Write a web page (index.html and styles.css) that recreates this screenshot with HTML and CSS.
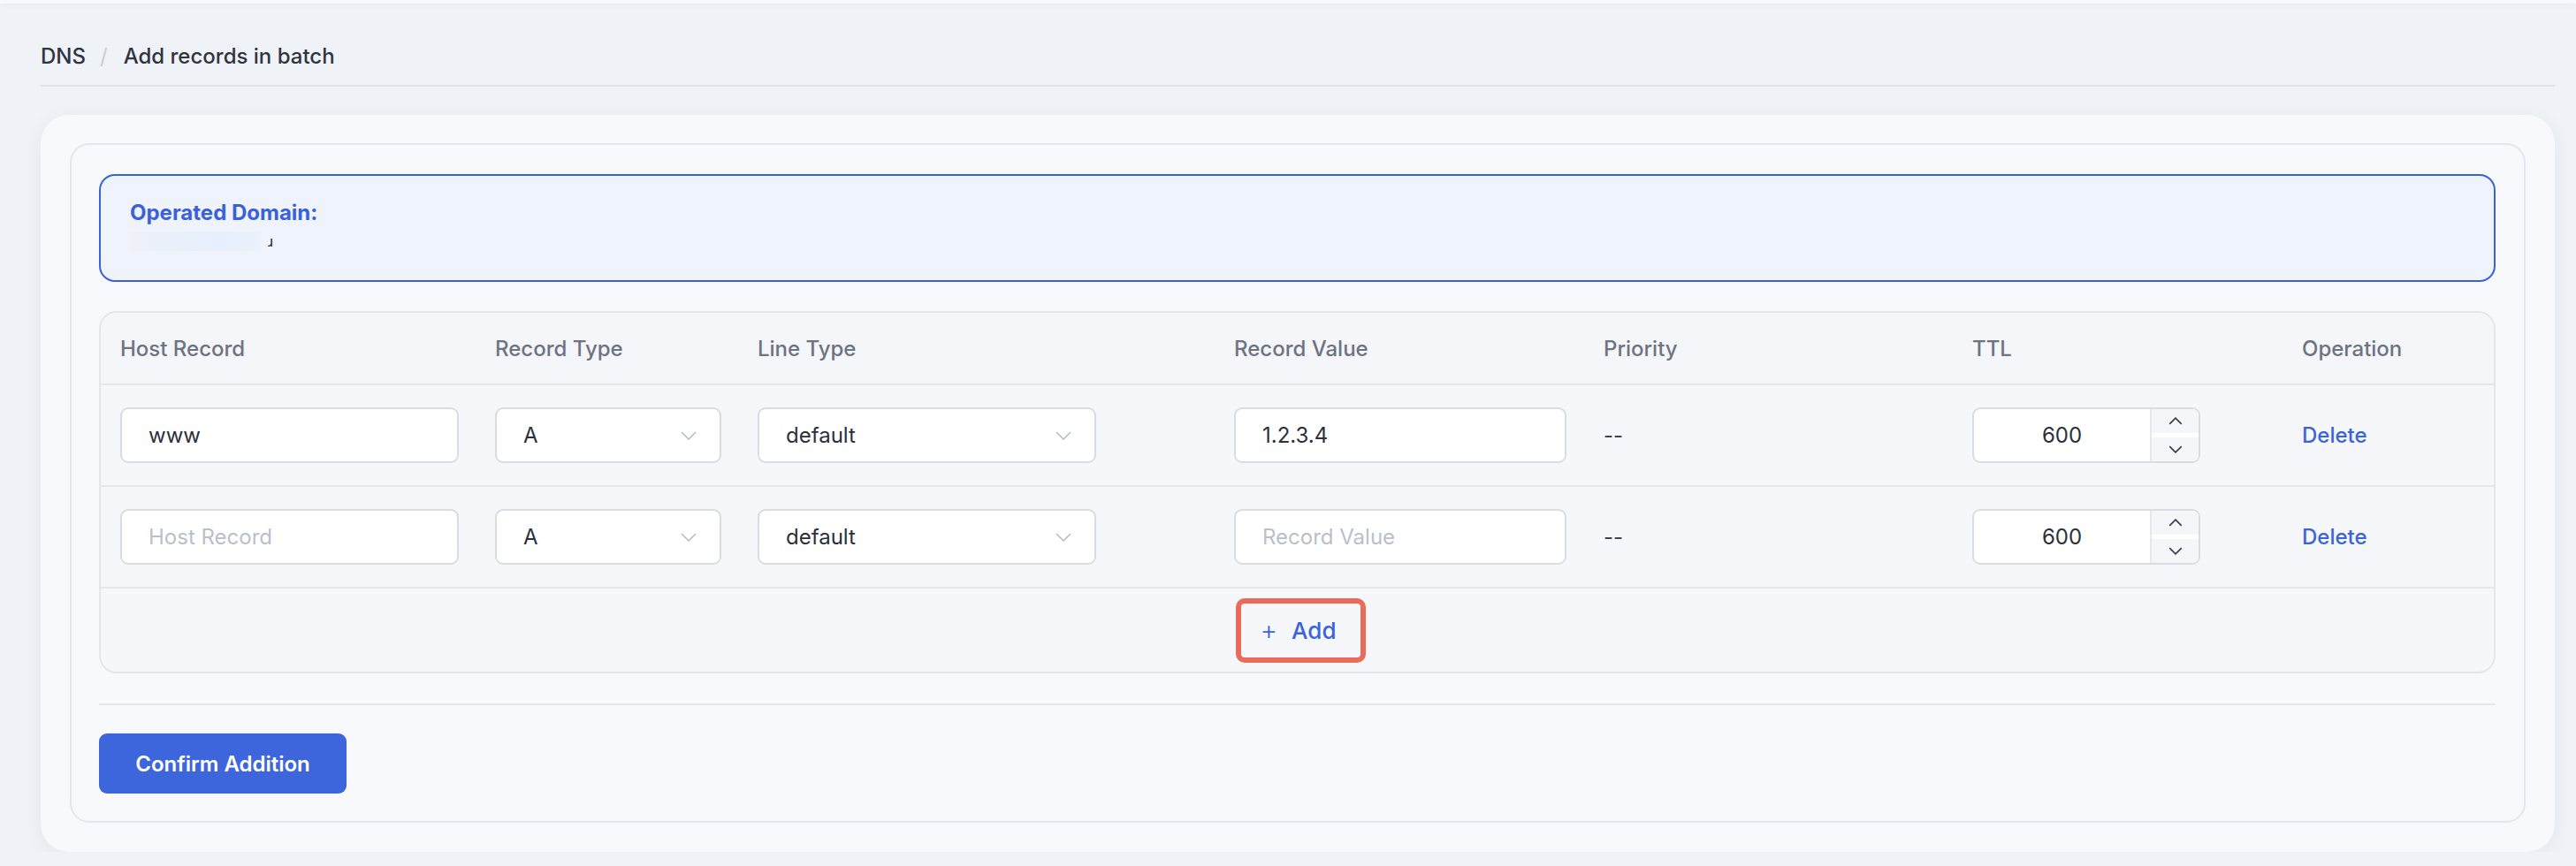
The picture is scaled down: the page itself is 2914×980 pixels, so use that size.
FILE: index.html
```html
<!doctype html>
<html lang="en">

<head>
    <meta charset="UTF-8">
    <title>Add records in batch</title>
    <link rel="stylesheet" href="styles.css">
</head>

<body>
    <div class="topbar"></div>
    <div class="page">
        <div class="crumbs">
            <span class="crumb">DNS</span>
            <span class="sep">/</span>
            <span class="crumb">Add records in batch</span>
        </div>

        <div class="card">
            <div class="panel">
                <div class="alert">
                    <div class="alert-title">Operated Domain:</div>
                    <div class="alert-domain"><span class="masked"></span><span class="tick">ɹ</span></div>
                </div>

                <div class="records">
                    <div class="row head">
                        <div class="cell">Host Record</div>
                        <div class="cell">Record Type</div>
                        <div class="cell">Line Type</div>
                        <div class="cell">Record Value</div>
                        <div class="cell">Priority</div>
                        <div class="cell">TTL</div>
                        <div class="cell">Operation</div>
                    </div>

                    <div class="row">
                        <div class="cell"><div class="input host">www</div></div>
                        <div class="cell">
                            <div class="input select type">A
                                <svg class="arrow" viewBox="0 0 18 10"><path d="M1 1l8 8 8-8" /></svg>
                            </div>
                        </div>
                        <div class="cell">
                            <div class="input select line">default
                                <svg class="arrow" viewBox="0 0 18 10"><path d="M1 1l8 8 8-8" /></svg>
                            </div>
                        </div>
                        <div class="cell"><div class="input value">1.2.3.4</div></div>
                        <div class="cell dash">--</div>
                        <div class="cell">
                            <div class="number">
                                <span class="num">600</span>
                                <span class="steps">
                                    <span class="step"><svg viewBox="0 0 14 8"><path d="M1 7l6-6 6 6" /></svg></span>
                                    <span class="step"><svg viewBox="0 0 14 8"><path d="M1 1l6 6 6-6" /></svg></span>
                                </span>
                            </div>
                        </div>
                        <div class="cell"><a class="del" href="#">Delete</a></div>
                    </div>

                    <div class="row">
                        <div class="cell"><div class="input host empty">Host Record</div></div>
                        <div class="cell">
                            <div class="input select type">A
                                <svg class="arrow" viewBox="0 0 18 10"><path d="M1 1l8 8 8-8" /></svg>
                            </div>
                        </div>
                        <div class="cell">
                            <div class="input select line">default
                                <svg class="arrow" viewBox="0 0 18 10"><path d="M1 1l8 8 8-8" /></svg>
                            </div>
                        </div>
                        <div class="cell"><div class="input value empty">Record Value</div></div>
                        <div class="cell dash">--</div>
                        <div class="cell">
                            <div class="number">
                                <span class="num">600</span>
                                <span class="steps">
                                    <span class="step"><svg viewBox="0 0 14 8"><path d="M1 7l6-6 6 6" /></svg></span>
                                    <span class="step"><svg viewBox="0 0 14 8"><path d="M1 1l6 6 6-6" /></svg></span>
                                </span>
                            </div>
                        </div>
                        <div class="cell"><a class="del" href="#">Delete</a></div>
                    </div>

                    <div class="add-row">
                        <a class="add" href="#"><span class="plus">+</span>Add</a>
                    </div>
                </div>

                <div class="footer">
                    <a class="confirm" href="#">Confirm Addition</a>
                </div>
            </div>
        </div>
    </div>
</body>

</html>
```

FILE: styles.css
```css
* {
    margin: 0;
    padding: 0;
    box-sizing: border-box;
}

a {
    text-decoration: none;
}

body {
    background: #eff2f6;
    font-family: Inter, "Noto Sans", sans-serif;
    font-size: 24px;
    color: #2c303b;
}

.topbar {
    height: 4px;
    background: #f8f9fb;
    box-shadow: 0 2px 6px rgba(0, 0, 0, 0.04);
}

.page {
    padding: 0 24px 0 46px;
}

.crumbs {
    display: flex;
    align-items: center;
    height: 94px;
    padding-top: 28px;
    border-bottom: 2px solid #dfe3e8;
    line-height: 32px;
    font-weight: 500;
    color: #30343e;
}

.crumbs .sep {
    margin: 0 18px 0 16px;
    color: #c8ccd3;
    font-weight: 400;
}

.card {
    margin-top: 32px;
    padding: 32px 33px 33px;
    background: #f8f9fc;
    border-radius: 32px;
    box-shadow: 0 4px 24px rgba(30, 40, 60, 0.05);
}

.panel {
    padding: 33px 32px 31px 31px;
    border: 2px solid #e3e6ee;
    border-radius: 22px;
}

.alert {
    height: 122px;
    padding: 26px 33px 0;
    background: #eef3fc;
    border: 2px solid #3b63d8;
    border-radius: 18px;
    line-height: 32px;
}

.alert-title {
    color: #3a60da;
    font-weight: 700;
}

.alert-domain {
    display: flex;
    align-items: center;
    height: 32px;
}

.masked {
    width: 150px;
    height: 22px;
    background: linear-gradient(90deg, #eef1f6 0%, #e9f0fb 40%, #e6effc 70%, #edf2fb 100%);
}

.tick {
    margin-left: 6px;
    font-size: 16px;
    color: #222;
}

.records {
    margin-top: 33px;
    border: 2px solid #e4e6ed;
    border-radius: 20px;
    background: #f6f7fb;
}

.row {
    display: grid;
    grid-template-columns: 424px 297px 539px 418px 417px 373px 1fr;
    align-items: center;
    height: 115px;
    border-bottom: 2px solid #e4e6ed;
}

.row.head {
    height: 82px;
    background: #f4f6fa;
    border-radius: 18px 18px 0 0;
    color: #6d7381;
    font-weight: 500;
}

.cell {
    padding-left: 22px;
}

.input {
    position: relative;
    display: flex;
    align-items: center;
    height: 63px;
    padding: 0 30px;
    background: #fff;
    border: 2px solid #d9dce3;
    border-radius: 9px;
    color: #2c303b;
}

.input.empty {
    color: #b9c0cb;
}

.host {
    width: 383px;
}

.type {
    width: 256px;
}

.line {
    width: 383px;
}

.value {
    width: 376px;
}

.select .arrow {
    position: absolute;
    right: 26px;
    top: 25px;
    width: 18px;
    height: 10px;
    fill: none;
    stroke: #b6bdc9;
    stroke-width: 1.6;
}

.dash {
    color: #3d4250;
}

.number {
    display: flex;
    width: 258px;
    height: 63px;
    background: #fff;
    border: 2px solid #d9dce3;
    border-radius: 9px;
    overflow: hidden;
}

.num {
    flex: 1;
    display: flex;
    align-items: center;
    justify-content: center;
    color: #2c303b;
}

.steps {
    display: flex;
    flex-direction: column;
    justify-content: space-between;
    width: 55px;
    border-left: 2px solid #e6e8ed;
    background: #fff;
}

.step {
    display: flex;
    align-items: center;
    justify-content: center;
    height: 27px;
    background: #f5f6f9;
}

.step svg {
    width: 16px;
    height: 9px;
    fill: none;
    stroke: #3b404c;
    stroke-width: 1.5;
}

.del {
    color: #3b63dc;
    font-weight: 500;
}

.add-row {
    display: flex;
    justify-content: center;
    align-items: center;
    height: 94px;
    padding-left: 8px;
}

.add {
    display: flex;
    align-items: center;
    height: 73px;
    padding: 0 28px 0 22px;
    border: 6px solid #ea6a5b;
    border-radius: 10px;
    color: #3b63dc;
    font-size: 26px;
    font-weight: 500;
}

.plus {
    margin-right: 16px;
    font-size: 30px;
    font-weight: 300;
}

.footer {
    margin-top: 34px;
    padding-top: 32px;
    border-top: 2px solid #e4e6ed;
}

.confirm {
    display: inline-flex;
    align-items: center;
    justify-content: center;
    width: 280px;
    height: 68px;
    background: #3d66dc;
    border-radius: 9px;
    color: #fff;
    font-size: 24px;
    font-weight: 600;
}
```
